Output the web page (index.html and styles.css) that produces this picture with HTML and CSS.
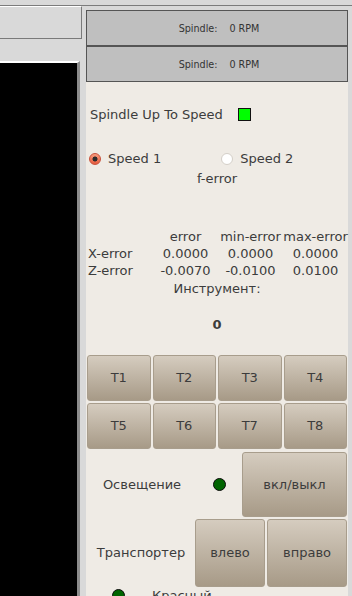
FILE: index.html
```html
<!DOCTYPE html>
<html>
<head>
<meta charset="utf-8">
<link rel="stylesheet" href="styles.css">
</head>
<body>
<div class="topbar"></div>
<div class="main">
  <div class="left">
    <div class="leftpanel"></div>
    <div class="screen"></div>
  </div>
  <div class="right">
    <div class="spbox"><span>Spindle:</span><span>0 RPM</span></div>
    <div class="spbox"><span>Spindle:</span><span>0 RPM</span></div>
    <div class="panel">
      <div class="uprow"><span>Spindle Up To Speed</span><span class="sq"></span></div>
      <div class="radiorow">
        <span class="radio on"></span><span class="rlabel">Speed 1</span>
        <span class="radio off"></span><span class="rlabel">Speed 2</span>
      </div>
      <div class="center ferr">f-error</div>
      <div class="table">
        <span></span><span class="c">error</span><span class="c">min-error</span><span class="c">max-error</span>
        <span>X-error</span><span class="c">0.0000</span><span class="c">0.0000</span><span class="c">0.0000</span>
        <span>Z-error</span><span class="c">-0.0070</span><span class="c">-0.0100</span><span class="c">0.0100</span>
      </div>
      <div class="center instr">Инструмент:</div>
      <div class="center zero">0</div>
      <div class="tools">
        <div class="btn">T1</div><div class="btn">T2</div><div class="btn">T3</div><div class="btn">T4</div>
        <div class="btn">T5</div><div class="btn">T6</div><div class="btn">T7</div><div class="btn">T8</div>
      </div>
      <div class="lightrow">
        <div class="lbl lbl1">Освещение</div>
        <div class="ledwrap"><span class="led"></span></div>
        <div class="btn bonoff">вкл/выкл</div>
      </div>
      <div class="convrow">
        <div class="lbl lbl2">Транспортер</div>
        <div class="btn bleft">влево</div>
        <div class="btn bright">вправо</div>
      </div>
      <div class="redrow">
        <span class="led"></span><span class="redtxt">Красный</span>
      </div>
    </div>
  </div>
</div>
</body>
</html>
```
FILE: styles.css
```css
html, body {
  margin: 0;
  padding: 0;
}
body {
  width: 352px;
  height: 596px;
  overflow: hidden;
  background: #d9d9d9;
  font-family: "DejaVu Sans", sans-serif;
  font-size: 13px;
  color: #3c3c3c;
}
.topbar {
  height: 5px;
  border-bottom: 1px solid #7c7c7c;
}
.main {
  display: flex;
}
.left {
  width: 82px;
  display: flex;
  flex-direction: column;
}
.leftpanel {
  height: 31px;
  border-top: 1px solid #ffffff;
  border-right: 1px solid #7a7a7a;
  border-bottom: 1px solid #7a7a7a;
}
.screen {
  margin-top: 22px;
  width: 77px;
  height: 540px;
  background: #000;
  border-top: 2px solid #ffffff;
  border-right: 3px solid #8c8c8c;
}
.right {
  margin-left: 4px;
  width: 262px;
  padding-top: 4px;
}
.spbox {
  height: 34px;
  background: #bfbfbf;
  border: 1px solid #555;
  display: flex;
  justify-content: center;
  align-items: center;
  gap: 12px;
  font-size: 9.6px;
  color: #333;
  padding-left: 4px;
}
.panel {
  background: #efebe5;
  height: 520px;
  display: flex;
  flex-direction: column;
}
.uprow {
  margin-top: 21px;
  height: 24px;
  display: flex;
  align-items: center;
  padding-left: 4px;
}
.sq {
  width: 11px;
  height: 11px;
  border: 1px solid #111;
  background: #00ff00;
  margin-left: 15px;
}
.radiorow {
  margin-top: 22px;
  height: 20px;
  display: flex;
  align-items: center;
  padding-left: 3px;
}
.radio {
  width: 12px;
  height: 12px;
  border-radius: 50%;
  box-sizing: border-box;
}
.radio.on {
  background: radial-gradient(circle, #2b2b2b 0 2.2px, transparent 2.8px), linear-gradient(#f79c7f, #e55b3d);
  border: 1px solid #c8503a;
}
.radio.off {
  background: #ffffff;
  border: 1px solid #d4cfc8;
  margin-left: 60px;
}
.rlabel {
  margin-left: 7px;
}
.center {
  text-align: center;
  height: 17px;
  line-height: 17px;
}
.ferr {
  margin-top: 1px;
}
.table {
  margin-top: 41px;
  display: grid;
  grid-template-columns: 65px 65px 65px 65px;
  padding-left: 2px;
  line-height: 17px;
}
.table .c {
  text-align: center;
}
.instr {
  margin-top: 1px;
}
.zero {
  margin-top: 19px;
  font-weight: bold;
}
.tools {
  margin-top: 22px;
  display: grid;
  grid-template-columns: repeat(4, 1fr);
  grid-auto-rows: 46px;
  gap: 2px;
  padding: 0 1px;
}
.btn {
  box-sizing: border-box;
  background: linear-gradient(#d5ccbf, #a79a87);
  border: 1px solid #a89d8c;
  border-radius: 3px;
  display: flex;
  align-items: center;
  justify-content: center;
  color: #3c3c3c;
}
.lightrow {
  margin-top: 3px;
  height: 66px;
  display: flex;
  padding-left: 1px;
}
.lbl {
  display: flex;
  align-items: center;
  justify-content: center;
}
.lbl1 {
  width: 110px;
}
.ledwrap {
  width: 45px;
  display: flex;
  align-items: center;
  justify-content: center;
}
.led {
  display: inline-block;
  width: 13px;
  height: 13px;
  box-sizing: border-box;
  border-radius: 50%;
  background: #006400;
  border: 1px solid #0a0a0a;
}
.bonoff {
  width: 105px;
}
.convrow {
  margin-top: 2px;
  height: 69px;
  display: flex;
  padding-left: 1px;
}
.lbl2 {
  width: 108px;
}
.bleft {
  width: 70px;
}
.bright {
  width: 80px;
  margin-left: 2px;
}
.redrow {
  margin-top: 2px;
  display: flex;
  align-items: flex-start;
  padding-left: 26px;
}
.redrow .led {
  margin-top: 0;
}
.redtxt {
  margin-left: 27px;
  line-height: 13px;
}
```
